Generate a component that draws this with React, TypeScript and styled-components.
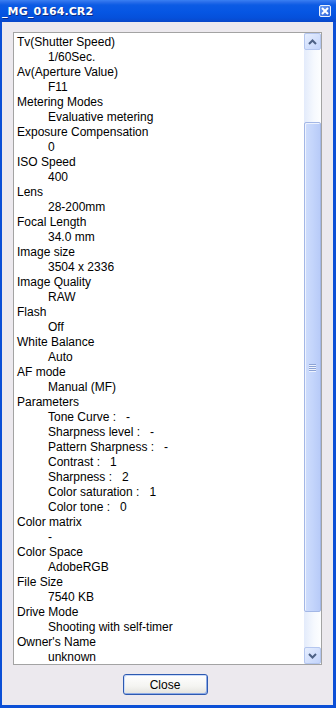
import React from "react";
import styled, { createGlobalStyle } from "styled-components";

const GlobalStyle = createGlobalStyle`
  html, body {
    margin: 0;
    padding: 0;
    width: 336px;
    height: 708px;
    overflow: hidden;
    background: #ECE9EE;
  }
  body {
    font-family: "Liberation Sans", Arial, sans-serif;
  }
`;

const Window = styled.div`
  width: 336px;
  height: 708px;
  display: flex;
  flex-direction: column;
`;

const TitleBar = styled.div`
  height: 22px;
  flex: none;
  display: flex;
  align-items: center;
  justify-content: space-between;
  padding: 0 5px 0 2px;
  background: linear-gradient(
    #3A80F3 0px,
    #2A6EEA 2px,
    #0C5BE4 5px,
    #0656E3 12px,
    #0550DB 18px,
    #0A47C8 22px
  );
`;

const Title = styled.span`
  color: #fff;
  font-weight: bold;
  font-size: 12px;
  letter-spacing: 0.1px;
  font-family: "DejaVu Sans", "Liberation Sans", sans-serif;
  font-size: 11px;
  text-shadow: 1px 1px 0 #0A2A86;
`;

const CloseBox = styled.div`
  width: 10px;
  height: 10px;
  border: 1px solid #EAF0FC;
  border-radius: 2px;
  background: linear-gradient(135deg, #6A9CF4, #2C64DA);
  display: flex;
  align-items: center;
  justify-content: center;
`;

const Frame = styled.div`
  flex: 1;
  min-height: 0;
  display: flex;
  flex-direction: column;
  gap: 9px;
  padding: 10px 11px;
  border-style: solid;
  border-color: #0B4FD6;
  border-width: 0 3px 3px 2px;
  background: #ECE9EE;
`;

const ListBox = styled.div`
  flex: 1;
  min-height: 0;
  display: flex;
  border: 1px solid #A3A3A3;
  background: #fff;
`;

const Items = styled.div`
  flex: 1;
  overflow: hidden;
  padding: 2px 0 0 3px;
  font-size: 12px;
  line-height: 15px;
  color: #000;
`;

const Line = styled.div<{ indent?: boolean }>`
  white-space: pre;
  padding-left: ${({ indent }) => (indent ? "31px" : "0")};
`;

const ScrollBar = styled.div`
  width: 17px;
  flex: none;
  display: flex;
  flex-direction: column;
  background: linear-gradient(to right, #E3EBFB, #F6F9FE 60%, #FDFEFF);
`;

const ArrowButton = styled.div`
  height: 17px;
  flex: none;
  box-sizing: border-box;
  border: 1px solid #B4C6EF;
  border-radius: 2px;
  background: linear-gradient(135deg, #E6EEFE, #C3D4FB);
  display: flex;
  align-items: center;
  justify-content: center;
`;

const Track = styled.div`
  flex: 1;
  display: flex;
  flex-direction: column;
`;

const Thumb = styled.div<{ offset: number; size: number }>`
  margin-top: ${({ offset }) => offset}px;
  height: ${({ size }) => size}px;
  box-sizing: border-box;
  border: 1px solid #A3B7E6;
  border-radius: 2px;
  background: linear-gradient(to right, #CFDDFC, #C4D5FB 50%, #B8CBF8);
  box-shadow: inset 1px 1px 0 #EEF3FE;
  display: flex;
  align-items: center;
  justify-content: center;
`;

const Grip = styled.div`
  width: 7px;
  display: flex;
  flex-direction: column;
  gap: 1px;
`;

const GripLine = styled.div`
  height: 1px;
  background: #8CA3D6;
  box-shadow: 0 1px 0 #EEF3FE;
`;

const ButtonRow = styled.div`
  display: flex;
  justify-content: center;
  padding-right: 5px;
`;

const PushButton = styled.button`
  width: 85px;
  height: 21px;
  padding: 0;
  border: 1px solid #2D59B0;
  border-radius: 3px;
  background: linear-gradient(#FFFFFF, #F4F4F1 60%, #E3E2DD);
  box-shadow: inset 1px 1px 0 #C9DBFA, inset -1px -1px 0 #8CAAE6;
  font-family: "Liberation Sans", Arial, sans-serif;
  font-size: 12px;
  color: #000;
`;

const Arrow = ({ up }: { up?: boolean }) => (
  <svg width="9" height="6" viewBox="0 0 9 6">
    <path
      d={up ? "M1 5 L4.5 1.5 L8 5" : "M1 1 L4.5 4.5 L8 1"}
      stroke="#4D6185"
      strokeWidth="2"
      fill="none"
    />
  </svg>
);

type Entry = { label: string; values: string[] };

const entries: Entry[] = [
  { label: "Tv(Shutter Speed)", values: ["1/60Sec."] },
  { label: "Av(Aperture Value)", values: ["F11"] },
  { label: "Metering Modes", values: ["Evaluative metering"] },
  { label: "Exposure Compensation", values: ["0"] },
  { label: "ISO Speed", values: ["400"] },
  { label: "Lens", values: ["28-200mm"] },
  { label: "Focal Length", values: ["34.0 mm"] },
  { label: "Image size", values: ["3504 x 2336"] },
  { label: "Image Quality", values: ["RAW"] },
  { label: "Flash", values: ["Off"] },
  { label: "White Balance", values: ["Auto"] },
  { label: "AF mode", values: ["Manual (MF)"] },
  {
    label: "Parameters",
    values: [
      "Tone Curve :   -",
      "Sharpness level :   -",
      "Pattern Sharpness :   -",
      "Contrast :   1",
      "Sharpness :   2",
      "Color saturation :   1",
      "Color tone :   0",
    ],
  },
  { label: "Color matrix", values: ["-"] },
  { label: "Color Space", values: ["AdobeRGB"] },
  { label: "File Size", values: ["7540 KB"] },
  { label: "Drive Mode", values: ["Shooting with self-timer"] },
  { label: "Owner's Name", values: ["unknown"] },
];

const App = () => {
  return (
    <>
      <GlobalStyle />
      <Window>
        <TitleBar>
          <Title>_MG_0164.CR2</Title>
          <CloseBox>
            <svg width="8" height="8" viewBox="0 0 8 8">
              <path d="M1 1 L7 7 M7 1 L1 7" stroke="#fff" strokeWidth="2" />
            </svg>
          </CloseBox>
        </TitleBar>
        <Frame>
          <ListBox>
            <Items>
              {entries.map((e) => (
                <React.Fragment key={e.label}>
                  <Line>{e.label}</Line>
                  {e.values.map((v) => (
                    <Line indent key={v}>
                      {v}
                    </Line>
                  ))}
                </React.Fragment>
              ))}
            </Items>
            <ScrollBar>
              <ArrowButton>
                <Arrow up />
              </ArrowButton>
              <Track>
                <Thumb offset={72} size={490}>
                  <Grip>
                    <GripLine />
                    <GripLine />
                    <GripLine />
                    <GripLine />
                  </Grip>
                </Thumb>
              </Track>
              <ArrowButton>
                <Arrow />
              </ArrowButton>
            </ScrollBar>
          </ListBox>
          <ButtonRow>
            <PushButton>Close</PushButton>
          </ButtonRow>
        </Frame>
      </Window>
    </>
  );
};

export default App;
